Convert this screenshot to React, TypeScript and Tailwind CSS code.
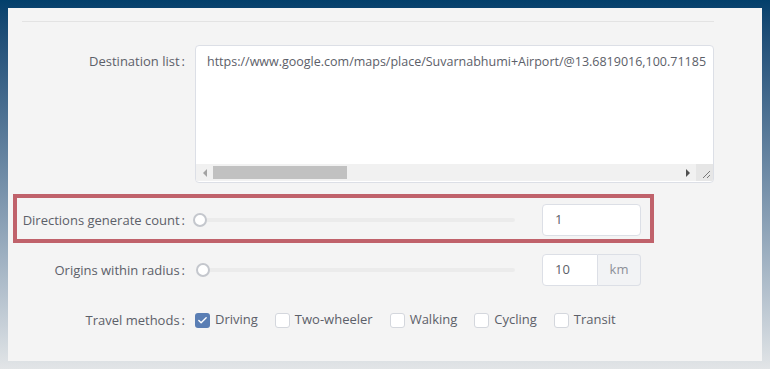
import { Check } from "lucide-react";

const FONT = "font-['Open_Sans','Noto_Sans',sans-serif]";

function Label({ children, className = "" }: { children: string; className?: string }) {
  return (
    <div className={`w-[187px] shrink-0 pr-[10px] text-right leading-[32px] ${className}`}>
      {children}
      <span className="ml-[2px]">:</span>
    </div>
  );
}

function Slider({ start }: { start: number }) {
  return (
    <div className="relative flex h-[32px] w-[320px] items-center" style={{ paddingLeft: start }}>
      <div className="h-[4px] flex-1 rounded-sm bg-[#ebebeb]" />
      <div
        className="absolute top-1/2 h-[14px] w-[14px] -translate-x-1/2 -translate-y-1/2 rounded-full border-2 border-[#c4c7cd] bg-white"
        style={{ left: start }}
      />
    </div>
  );
}

function Box({ label, checked = false }: { label: string; checked?: boolean }) {
  return (
    <div className="flex items-center gap-[5px]">
      {checked ? (
        <span className="flex h-[15px] w-[15px] items-center justify-center rounded-[3px] bg-[#5a7eb4]">
          <Check size={11} strokeWidth={3} className="text-white" />
        </span>
      ) : (
        <span className="h-[15px] w-[15px] rounded-[3px] border border-[#d4d7dd] bg-white" />
      )}
      <span>{label}</span>
    </div>
  );
}

export default function App() {
  return (
    <div className={`h-[369px] w-[770px] bg-gradient-to-b from-[#023f6b] to-[#e2e5e7] p-[8px] text-[13px] text-[#5c6069] ${FONT}`}>
      <div className="relative h-full bg-[#f4f4f4] pt-[13px]">
        <div className="ml-[14px] mr-[48px] h-px bg-[#e3e3e3]" />

        <div className="mt-[23px] flex flex-col">
          {/* destination list */}
          <div className="flex">
            <Label>Destination list</Label>
            <div className="relative h-[138px] w-[519px] overflow-hidden rounded-[4px] border border-[#dcdfe6] bg-white">
              <div className="whitespace-nowrap pl-[11px] pt-[6px] text-[12.5px] leading-[20px]">
                https://www.google.com/maps/place/Suvarnabhumi+Airport/@13.6819016,100.71185
              </div>
              {/* horizontal scrollbar */}
              <div className="absolute bottom-px left-0 right-0 flex h-[17px] bg-[#f1f1f1]">
                <div className="flex w-[17px] items-center justify-center">
                  <span className="h-0 w-0 border-y-[4px] border-r-[4px] border-y-transparent border-r-[#a3a3a3]" />
                </div>
                <div className="flex flex-1 items-center">
                  <div className="h-[13px] w-[134px] bg-[#c1c1c1]" />
                </div>
                <div className="flex w-[17px] items-center justify-center">
                  <span className="h-0 w-0 border-y-[4px] border-l-[4px] border-y-transparent border-l-[#505050]" />
                </div>
                <div className="flex w-[17px] items-end justify-end bg-[#e6e6e6] p-[2px]">
                  <svg width="10" height="10" viewBox="0 0 10 10">
                    <path d="M9 2 L2 9 M9 6 L6 9" stroke="#777" strokeWidth="1" />
                  </svg>
                </div>
              </div>
            </div>
          </div>

          {/* directions count */}
          <div className="mt-[21px] flex">
            <Label className="pr-[7px]">Directions generate count</Label>
            <Slider start={5} />
            <div className="ml-[27px] flex h-[32px] w-[99px] items-center rounded-[4px] border border-[#dcdfe6] bg-white pl-[12px]">
              1
            </div>
          </div>

          {/* radius */}
          <div className="mt-[18px] flex">
            <Label>Origins within radius</Label>
            <Slider start={8} />
            <div className="ml-[27px] flex h-[32px] w-[99px]">
              <div className="flex w-[56px] items-center rounded-l-[4px] border border-[#dcdfe6] bg-white pl-[12px]">
                10
              </div>
              <div className="flex flex-1 items-center justify-center rounded-r-[4px] border border-l-0 border-[#dcdfe6] bg-[#f2f3f5] text-[#8d9098]">
                km
              </div>
            </div>
          </div>

          {/* travel methods */}
          <div className="mt-[18px] flex">
            <Label>Travel methods</Label>
            <div className="flex h-[32px] items-center gap-[17px]">
              <Box label="Driving" checked />
              <Box label="Two-wheeler" />
              <Box label="Walking" />
              <Box label="Cycling" />
              <Box label="Transit" />
            </div>
          </div>
        </div>

        {/* highlight */}
        <div className="pointer-events-none absolute left-[5px] top-[186px] h-[49px] w-[641px] border-4 border-[#c0626b]" />
      </div>
    </div>
  );
}
